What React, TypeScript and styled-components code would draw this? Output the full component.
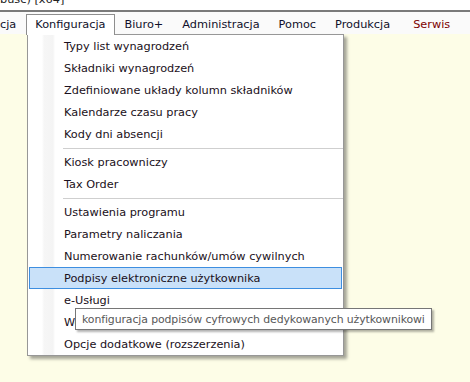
import styled, { createGlobalStyle } from "styled-components";

/*********************  ESTILOS  *********************/
const GlobalStyle = createGlobalStyle`
  html, body {
    margin: 0;
    padding: 0;
    background: #fdfde7;
  }
  body {
    font-family: "DejaVu Sans", Tahoma, sans-serif;
    font-size: 11.3px;
  }
`;

const Screen = styled.div`
  position: relative;
  width: 470px;
  height: 382px;
  overflow: hidden;
  display: flex;
  flex-direction: column;
  background: #fdfde7;
`;

const TitleBar = styled.div`
  height: 10px;
  overflow: hidden;
  background: #ffffff;
  border-bottom: 2px solid #7a7a7a;
  color: #222;
`;

const TitleText = styled.div`
  margin-top: -8px;
  line-height: 16px;
  white-space: nowrap;
`;

const MenuBar = styled.div`
  height: 22px;
  display: flex;
  align-items: flex-start;
  background: #fafafa;
  padding-top: 2px;
  box-sizing: border-box;
`;

const MenuTitle = styled.div<{ $open?: boolean; $danger?: boolean; $first?: boolean }>`
  position: relative;
  z-index: ${(p) => (p.$open ? 3 : 1)};
  height: ${(p) => (p.$open ? "21px" : "20px")};
  line-height: 19px;
  padding: ${(p) => (p.$first ? "0 9px 0 0" : "0 9px 0 8px")};
  margin-left: ${(p) => (p.$first ? "-1px" : p.$danger ? "4px" : "0")};
  box-sizing: border-box;
  white-space: nowrap;
  color: ${(p) => (p.$danger ? "#7d0000" : "#10102a")};
  background: ${(p) => (p.$open ? "#ffffff" : "transparent")};
  border: 1px solid ${(p) => (p.$open ? "#8e8e8e" : "transparent")};
  border-bottom: none;
`;

const Dropdown = styled.div`
  position: absolute;
  left: 27px;
  top: 34px;
  width: 317px;
  z-index: 2;
  box-sizing: border-box;
  background: #ffffff;
  border: 1px solid #979797;
  box-shadow: 3px 3px 3px rgba(0, 0, 0, 0.35);
  display: flex;
  flex-direction: column;
  background-image: linear-gradient(
    to right,
    #ffffff 0,
    #ffffff 14px,
    #f6f6f6 16px,
    #f4f4f4 25px,
    #ffffff 27px
  );
`;

const Item = styled.div<{ $active?: boolean }>`
  height: 22px;
  margin: 0 1px;
  padding-left: 34px;
  box-sizing: border-box;
  display: flex;
  align-items: center;
  white-space: nowrap;
  color: #1a1020;
  border: 1px solid ${(p) => (p.$active ? "#3d8ee0" : "transparent")};
  background: ${(p) => (p.$active ? "#c9e1f9" : "transparent")};
`;

const Separator = styled.div`
  height: 6px;
  display: flex;
  align-items: center;
  padding-left: 35px;

  &::after {
    content: "";
    flex: 1;
    height: 1px;
    background: #cfcfcf;
  }
`;

const Tooltip = styled.div`
  position: absolute;
  left: 75px;
  top: 308px;
  z-index: 5;
  height: 22px;
  box-sizing: border-box;
  padding: 0 6px;
  display: flex;
  align-items: center;
  white-space: nowrap;
  font-size: 10.9px;
  letter-spacing: -0.1px;
  color: #575757;
  background: #ffffff;
  border: 1px solid #767676;
  box-shadow: 2px 2px 2px rgba(0, 0, 0, 0.3);
`;

/*********************  DATOS  *********************/
type Entry = { label: string; active?: boolean } | "sep";

const menuTitles = ["Biuro+", "Administracja", "Pomoc", "Produkcja"];

const entries: Entry[] = [
  { label: "Typy list wynagrodzeń" },
  { label: "Składniki wynagrodzeń" },
  { label: "Zdefiniowane układy kolumn składników" },
  { label: "Kalendarze czasu pracy" },
  { label: "Kody dni absencji" },
  "sep",
  { label: "Kiosk pracowniczy" },
  { label: "Tax Order" },
  "sep",
  { label: "Ustawienia programu" },
  { label: "Parametry naliczania" },
  { label: "Numerowanie rachunków/umów cywilnych" },
  { label: "Podpisy elektroniczne użytkownika", active: true },
  { label: "e-Usługi" },
  { label: "Wersja" },
  { label: "Opcje dodatkowe (rozszerzenia)" },
];

export default function App() {
  return (
    <>
      <GlobalStyle />
      <Screen>
        <TitleBar>
          <TitleText>busc) [x64]</TitleText>
        </TitleBar>
        <MenuBar>
          <MenuTitle $first>cja</MenuTitle>
          <MenuTitle $open>Konfiguracja</MenuTitle>
          {menuTitles.map((t) => (
            <MenuTitle key={t}>{t}</MenuTitle>
          ))}
          <MenuTitle $danger>Serwis</MenuTitle>
        </MenuBar>

        <Dropdown>
          {entries.map((e, i) =>
            e === "sep" ? (
              <Separator key={`sep-${i}`} />
            ) : (
              <Item key={e.label} $active={e.active}>
                {e.label}
              </Item>
            )
          )}
        </Dropdown>

        <Tooltip>konfiguracja podpisów cyfrowych dedykowanych użytkownikowi</Tooltip>
      </Screen>
    </>
  );
}
